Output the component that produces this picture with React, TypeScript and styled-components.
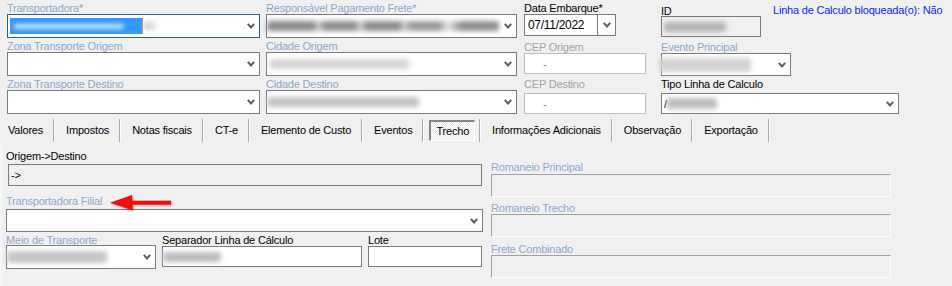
import React from "react";
import styled, { createGlobalStyle } from "styled-components";

const Global = createGlobalStyle`
  *, *::before, *::after { box-sizing: border-box; }
  html, body { margin: 0; padding: 0; background: #f0f0f0; }
  body { font-family: "Liberation Sans", Arial, sans-serif; font-size: 11px; letter-spacing: -0.2px; color: #000; }
`;

type Tone = "muted" | "disabled" | "normal";
const toneColor: Record<Tone, string> = {
  muted: "#8ea8cc",
  disabled: "#a3a3a3",
  normal: "#000000",
};

const Page = styled.div`
  width: 952px;
  height: 286px;
  overflow: hidden;
  background: #f0f0f0;
`;

const Top = styled.div`
  display: flex;
  padding-left: 7px;
  height: 114px;
`;

const Column = styled.div<{ $w: number; $gap?: number }>`
  width: ${(p) => p.$w}px;
  margin-right: ${(p) => p.$gap ?? 0}px;
  flex-shrink: 0;
  display: flex;
  flex-direction: column;
`;

const Row = styled.div<{ $mt?: number; $gap?: number }>`
  display: flex;
  align-items: flex-start;
  margin-top: ${(p) => p.$mt ?? 0}px;
  gap: ${(p) => p.$gap ?? 0}px;
`;

const Field = styled.div<{ $mt?: number; $w?: number; $ml?: number }>`
  display: flex;
  flex-direction: column;
  margin-top: ${(p) => p.$mt ?? 0}px;
  margin-left: ${(p) => p.$ml ?? 0}px;
  width: ${(p) => (p.$w ? `${p.$w}px` : "auto")};
  flex-shrink: 0;
`;

const Label = styled.div<{ $tone?: Tone; $h?: number; $pt?: number }>`
  position: relative;
  height: ${(p) => p.$h ?? 14}px;
  padding-top: ${(p) => p.$pt ?? 0}px;
  line-height: 16px;
  white-space: nowrap;
  color: ${(p) => toneColor[p.$tone ?? "normal"]};
`;

const Combo = styled.div<{ $h: number; $w?: number; $focus?: boolean; $ml?: number }>`
  height: ${(p) => p.$h}px;
  width: ${(p) => (p.$w ? `${p.$w}px` : "100%")};
  margin-left: ${(p) => p.$ml ?? 0}px;
  border: 1px solid ${(p) => (p.$focus ? "#2b5a86" : "#7a7a7a")};
  background: #ffffff;
  display: flex;
  align-items: center;
  padding: 0 4px 0 2px;
  overflow: visible;
`;

const ComboValue = styled.div`
  flex: 1;
  min-width: 0;
  height: 100%;
  display: flex;
  align-items: center;
`;

const TextBox = styled.div<{
  $h: number;
  $w?: number;
  $ml?: number;
  $variant: "white" | "cep" | "ro" | "sunken";
}>`
  height: ${(p) => p.$h}px;
  width: ${(p) => (p.$w ? `${p.$w}px` : "100%")};
  margin-left: ${(p) => p.$ml ?? 0}px;
  display: flex;
  align-items: center;
  padding-left: 2px;
  background: ${(p) => (p.$variant === "white" || p.$variant === "cep" ? "#ffffff" : "#f0f0f0")};
  border: 1px solid
    ${(p) => (p.$variant === "cep" ? "#bdbdbd" : p.$variant === "sunken" ? "#a0a0a0" : "#7a7a7a")};
  ${(p) =>
    p.$variant === "sunken"
      ? "border-right-color: #ffffff; border-bottom-color: #ffffff;"
      : ""}
`;

const CepDash = styled.span`
  color: #8a8a8a;
  margin-left: 16px;
  line-height: 14px;
`;

const Arrowish = styled.span`
  line-height: 14px;
`;

const Smudge = styled.div<{ $w: number; $h?: number; $bg: string; $ml?: number; $r?: number }>`
  width: ${(p) => p.$w}px;
  height: ${(p) => p.$h ?? 10}px;
  margin-left: ${(p) => p.$ml ?? 0}px;
  background: ${(p) => p.$bg};
  filter: blur(${(p) => p.$r ?? 2.5}px);
  border-radius: 3px;
  flex-shrink: 0;
`;

const Selection = styled.div`
  width: 133px;
  height: 16px;
  background: #3399ff;
  border-right: 1px solid #d98a3a;
  display: flex;
  align-items: center;
  flex-shrink: 0;
`;

const DateBox = styled.div`
  width: 92px;
  height: 22px;
  border: 1px solid #7a7a7a;
  background: #ffffff;
  display: flex;
`;

const DateText = styled.div`
  flex: 1;
  font-size: 12px;
  letter-spacing: -0.3px;
  line-height: 20px;
  padding-left: 3px;
`;

const DateButton = styled.div`
  width: 18px;
  border-left: 1px solid #7a7a7a;
  display: flex;
  align-items: center;
  justify-content: center;
`;

const LockInfo = styled.div`
  margin-left: 12px;
  padding-top: 2px;
  line-height: 16px;
  color: #0a1eff;
  white-space: nowrap;
`;

const TabBar = styled.div`
  display: flex;
  height: 23px;
  margin-top: 5px;
  padding-left: 6px;
`;

const Tab = styled.div<{ $active?: boolean }>`
  line-height: 23px;
  padding: ${(p) => (p.$active ? "0 4px 0 6px" : "0 10px 0 12px")};
  border-right: 1px solid #a9a9a9;
  box-shadow: 1px 0 0 #ffffff;
  white-space: nowrap;
  &:first-child {
    padding-left: 2px;
  }
`;

const Pressed = styled.div`
  margin-top: 1px;
  height: 21px;
  padding: 0 5px 0 5px;
  line-height: 18px;
  border-top: 2px solid #858585;
  border-left: 2px solid #858585;
  border-right: 1px solid #ffffff;
  border-bottom: 1px solid #ffffff;
  background: repeating-conic-gradient(#ffffff 0 25%, #e9e9e9 0 50%) 0 0 / 2px 2px;
`;

const Lower = styled.div`
  display: flex;
  height: 144px;
  padding: 6px 0 0 4px;
  border-left: 2px solid #f7f7f7;
  gap: 8px;
`;

const ArrowMark = styled.svg`
  position: absolute;
  left: 102px;
  top: 1px;
  filter: drop-shadow(1px 1px 1px rgba(0, 0, 0, 0.3));
`;

const ChevronSvg = styled.svg`
  flex-shrink: 0;
  display: block;
`;

const Chevron = () => (
  <ChevronSvg width="8" height="6" viewBox="0 0 8 6">
    <polyline points="0.8,0.8 4,4.4 7.2,0.8" fill="none" stroke="#5c5c5c" strokeWidth="2" />
  </ChevronSvg>
);

const RedArrow = () => (
  <ArrowMark width="66" height="18" viewBox="0 0 66 18">
    <polygon points="2,8.7 24,1 25,16.5" fill="#f20d0d" />
    <rect x="23" y="6.7" width="40" height="4" fill="#f20d0d" />
  </ArrowMark>
);

export default function App() {
  return (
    <Page>
      <Global />
      <Top>
        <Column $w={253} $gap={6}>
          <Field>
            <Label $tone="muted">Transportadora*</Label>
            <Combo $h={24} $focus>
              <ComboValue>
                <Selection>
                  <Smudge $w={110} $h={5} $ml={4} $bg="rgba(255,255,255,0.75)" $r={2} />
                </Selection>
                <Smudge $w={12} $h={8} $bg="rgba(200,200,200,0.7)" />
              </ComboValue>
              <Chevron />
            </Combo>
          </Field>
          <Field>
            <Label $tone="muted">Zona Transporte Origem</Label>
            <Combo $h={24}>
              <ComboValue />
              <Chevron />
            </Combo>
          </Field>
          <Field>
            <Label $tone="muted">Zona Transporte Destino</Label>
            <Combo $h={24}>
              <ComboValue />
              <Chevron />
            </Combo>
          </Field>
        </Column>

        <Column $w={251} $gap={7}>
          <Field>
            <Label $tone="muted">Responsável Pagamento Frete*</Label>
            <Combo $h={24}>
              <ComboValue>
                <Smudge
                  $w={232}
                  $h={10}
                  $ml={-2}
                  $bg="linear-gradient(90deg, #8a8a8a 0 20%, #d0d0d0 22%, #8f8f8f 25% 38%, #d5d5d5 40%, #8c8c8c 43% 57%, #d4d4d4 59%, #9a9a9a 62% 74%, #e6e6e6 78%, #8e8e8e 84% 100%)"
                />
              </ComboValue>
              <Chevron />
            </Combo>
          </Field>
          <Field>
            <Label $tone="muted">Cidade Origem</Label>
            <Combo $h={24}>
              <ComboValue>
                <Smudge $w={140} $h={10} $bg="#d6d6d6" />
              </ComboValue>
              <Chevron />
            </Combo>
          </Field>
          <Field>
            <Label $tone="muted">Cidade Destino</Label>
            <Combo $h={24}>
              <ComboValue>
                <Smudge $w={152} $h={10} $ml={-2} $bg="#c4c4c4" />
              </ComboValue>
              <Chevron />
            </Combo>
          </Field>
        </Column>

        <Column $w={122} $gap={15}>
          <Field>
            <Label>Data Embarque*</Label>
            <DateBox>
              <DateText>07/11/2022</DateText>
              <DateButton>
                <Chevron />
              </DateButton>
            </DateBox>
          </Field>
          <Field $mt={3}>
            <Label $tone="disabled">CEP Origem</Label>
            <TextBox $h={21} $variant="cep">
              <CepDash>-</CepDash>
            </TextBox>
          </Field>
          <Field $mt={2}>
            <Label $tone="disabled" $h={17}>
              CEP Destino
            </Label>
            <TextBox $h={21} $variant="cep">
              <CepDash>-</CepDash>
            </TextBox>
          </Field>
        </Column>

        <Column $w={285}>
          <Row>
            <Field $w={100}>
              <Label $h={16} $pt={3}>
                ID
              </Label>
              <TextBox $h={21} $variant="ro">
                <Smudge $w={62} $h={10} $bg="#b4b4b4" />
              </TextBox>
            </Field>
            <LockInfo>Linha de Calculo bloqueada(o): Não</LockInfo>
          </Row>
          <Field $mt={2} $w={130}>
            <Label $tone="muted">Evento Principal</Label>
            <Combo $h={23}>
              <ComboValue>
                <Smudge $w={92} $h={14} $ml={-5} $bg="#d2d2d2" />
              </ComboValue>
              <Chevron />
            </Combo>
          </Field>
          <Field $w={238}>
            <Label $h={17}>Tipo Linha de Calculo</Label>
            <Combo $h={21}>
              <ComboValue>
                <Arrowish>/</Arrowish>
                <Smudge $w={50} $h={11} $bg="#bdbdbd" />
              </ComboValue>
              <Chevron />
            </Combo>
          </Field>
        </Column>
      </Top>

      <TabBar>
        <Tab>Valores</Tab>
        <Tab>Impostos</Tab>
        <Tab>Notas fiscais</Tab>
        <Tab>CT-e</Tab>
        <Tab>Elemento de Custo</Tab>
        <Tab>Eventos</Tab>
        <Tab $active>
          <Pressed>Trecho</Pressed>
        </Tab>
        <Tab>Informações Adicionais</Tab>
        <Tab>Observação</Tab>
        <Tab>Exportação</Tab>
      </TabBar>

      <Lower>
        <Column $w={477}>
          <Field>
            <Label $h={16}>Origem-&gt;Destino</Label>
            <TextBox $h={22} $w={474} $ml={2} $variant="ro">
              <Arrowish>-&gt;</Arrowish>
            </TextBox>
          </Field>
          <Field $mt={7}>
            <Label $tone="muted" $h={16}>
              Transportadora Filial
              <RedArrow />
            </Label>
            <Combo $h={23}>
              <ComboValue />
              <Chevron />
            </Combo>
          </Field>
          <Row $gap={6}>
            <Field $w={150}>
              <Label $tone="muted" $h={13}>
                Meio de Transporte
              </Label>
              <Combo $h={24}>
                <ComboValue>
                  <Smudge $w={100} $h={12} $ml={-2} $bg="#c6c6c6" />
                </ComboValue>
                <Chevron />
              </Combo>
            </Field>
            <Field $w={200}>
              <Label>Separador Linha de Cálculo</Label>
              <TextBox $h={21} $variant="white">
                <Smudge $w={58} $h={10} $ml={-2} $bg="#bcbcbc" />
              </TextBox>
            </Field>
            <Field $w={114}>
              <Label>Lote</Label>
              <TextBox $h={21} $variant="white" />
            </Field>
          </Row>
        </Column>

        <Column $w={400}>
          <Field $mt={11}>
            <Label $tone="muted" $h={15}>
              Romaneio Principal
            </Label>
            <TextBox $h={23} $variant="sunken" />
          </Field>
          <Field $mt={3}>
            <Label $tone="muted">Romaneio Trecho</Label>
            <TextBox $h={23} $variant="sunken" />
          </Field>
          <Field $mt={4}>
            <Label $tone="muted">Frete Combinado</Label>
            <TextBox $h={23} $variant="sunken" />
          </Field>
        </Column>
      </Lower>
    </Page>
  );
}
